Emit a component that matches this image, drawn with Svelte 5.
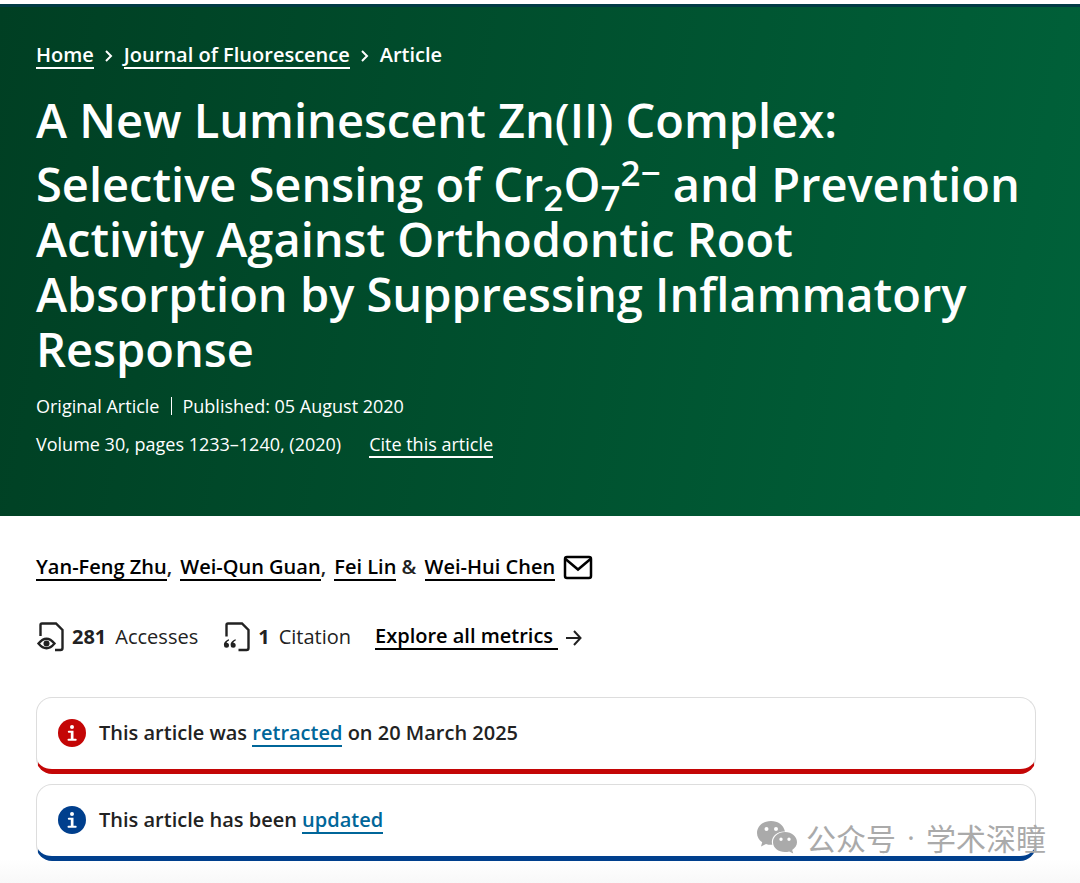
<script>
  const authors = ['Yan-Feng Zhu', 'Wei-Qun Guan', 'Fei Lin', 'Wei-Hui Chen'];
  const separators = ['', ', ', ', ', ' & '];
</script>

<svelte:head><title>Journal of Fluorescence</title></svelte:head>

<header>
  <nav aria-label="Breadcrumbs">
    <a href="#home">Home</a>
    <svg viewBox="0 0 10 12" aria-hidden="true"><path d="M2 1 7 6 2 11" /></svg>
    <a href="#journal">Journal of Fluorescence</a>
    <svg viewBox="0 0 10 12" aria-hidden="true"><path d="M2 1 7 6 2 11" /></svg>
    <span>Article</span>
  </nav>
  <h1>A New Luminescent Zn(II) Complex: Selective Sensing of Cr<sub>2</sub>O<sub>7</sub><sup>2−</sup> and Prevention Activity Against Orthodontic Root Absorption by Suppressing Inflammatory Response</h1>
  <ul class="identifiers">
    <li>Original Article</li>
    <li>Published: 05 August 2020</li>
  </ul>
  <p class="volume"><span>Volume 30, pages 1233–1240, (2020)</span><a href="#cite">Cite this article</a></p>
</header>

<main>
  <p class="authors">
    <span>{#each authors as author, i}{separators[i]}<a href="#author">{author}</a>{/each}</span>
    <a class="mail" href="#mail" aria-label="Email the corresponding author">
      <svg width="30" height="26" viewBox="0 0 30 26"><rect x="2" y="3" width="26" height="21" rx="2" /><path d="m2.500 5 12.500 10.500L27.500 5" /></svg>
    </a>
  </p>

  <ul class="metrics">
    <li>
      <svg width="30" height="30" viewBox="0 0 30 30" aria-hidden="true">
        <path d="M4.500 14V3Q4.500 1.500 6 1.500h14l6.500 6.500v18q0 2-2 2H19" />
        <path d="M2.500 21.500q8-9.500 16 0-8 9.500-16 0Z" />
        <circle class="dot" cx="10.500" cy="21.500" r="3" />
      </svg>
      <strong>281</strong><span>Accesses</span>
    </li>
    <li>
      <svg width="30" height="30" viewBox="0 0 30 30" aria-hidden="true">
        <path d="M4.500 14.500V3Q4.500 1.500 6 1.500h14l6.500 6.500v18q0 2-2 2H16.500" />
        <path class="dot" d="M7 17.200C3 18.500 1.700 21 2 23.200a2.500 2.500 0 1 0 2.500-2.500q.5-1.500 2.500-2.200ZM13.700 17.200C9.700 18.500 8.400 21 8.700 23.200a2.500 2.500 0 1 0 2.500-2.500q.5-1.500 2.500-2.200Z" />
      </svg>
      <strong>1</strong><span>Citation</span>
    </li>
    <li>
      <a class="explore" href="#metrics">Explore all metrics&nbsp;</a>
      <svg class="arrow" width="18" height="18" viewBox="0 0 18 18" aria-hidden="true"><path d="M1 10h14.500M9 3l6.500 7L9 17" /></svg>
    </li>
  </ul>

  <div class="notices">
    <p class="notice retracted">
      <svg viewBox="0 0 28 28" aria-hidden="true"><circle cx="14" cy="14" r="14" /><path d="M14 6a2 2 0 1 1 0 4 2 2 0 0 1 0-4ZM10.800 11.700h4.700v8h2.200q1 0 1 1t-1 1h-7.200q-1 0-1-1t1-1h2.300v-6h-2q-1 0-1-1t1-1Z" /></svg>
      <span>This article was <a href="#retracted">retracted</a> on 20 March 2025</span>
    </p>
    <p class="notice updated">
      <svg viewBox="0 0 28 28" aria-hidden="true"><circle cx="14" cy="14" r="14" /><path d="M14 6a2 2 0 1 1 0 4 2 2 0 0 1 0-4ZM10.800 11.700h4.700v8h2.200q1 0 1 1t-1 1h-7.200q-1 0-1-1t1-1h2.300v-6h-2q-1 0-1-1t1-1Z" /></svg>
      <span>This article has been <a href="#updated">updated</a></span>
    </p>
    <div class="watermark" lang="zh">
      <svg width="42" height="34" viewBox="0 0 42 34" aria-hidden="true">
        <path fill-rule="evenodd" d="M15 1C7 1 1 6.300 1 13c0 3.800 2 7 5.200 9.300L5 26.500l5-2.500c2 .7 4 1 6.300.8C14 17 21 11 29 11.500 27.500 5 22 1 15 1ZM10.500 7a2 2 0 1 1 0 4 2 2 0 0 1 0-4Zm9.500 0a2 2 0 1 1 0 4 2 2 0 0 1 0-4Z" />
        <path fill-rule="evenodd" d="M29 12c-6.700 0-12 4.500-12 10.200S22.300 32 29 32c1.500 0 3-.2 4.200-.6l4 2.100-1-3.600c3-2 4.800-4.500 4.800-7.700C41 16.500 35.700 12 29 12Zm-4 5.500a1.700 1.700 0 1 1 0 3.400 1.700 1.700 0 0 1 0-3.400Zm8 0a1.700 1.700 0 1 1 0 3.400 1.700 1.700 0 0 1 0-3.400Z" />
      </svg>
      <span>公众号</span><span class="point">·</span><span>学术深瞳</span>
    </div>
  </div>
</main>

<style>
  :global(body) {
    margin: 0;
    min-height: 100vh;
    color: #222;
    background: linear-gradient(#fff calc(100% - 24px), #f8f8f8) no-repeat;
    font: 20px/28px "Open Sans", "Noto Sans", sans-serif;
  }
  header {
    padding: 34px 36px 58px;
    border-top: 3px solid #003b44;
    margin-top: 4px;
    background: linear-gradient(100deg, #003f23, #00623a);
    color: #fff;
  }
  a { color: inherit; text-decoration: none; border-bottom: 2px solid; }
  p, ul, h1 { margin: 0; padding: 0; }
  ul { list-style: none; display: flex; }
  svg { flex: none; fill: none; stroke: currentColor; stroke-width: 2; }
  nav, .authors, .notice { display: flex; align-items: center; font-weight: 600; }
  nav { gap: 10px; align-items: baseline; }
  nav a, .volume a, .authors a, .explore, .notice a { line-height: 24px; display: inline-block; }
  nav svg { width: 10px; height: 12px; }
  h1 { margin-top: 24px; font-size: 47px; line-height: 55px; font-weight: 600; }
  sub, sup { font-size: 35px; line-height: 50px; }
  sub { vertical-align: -9px; line-height: 0; }
  sup { vertical-align: 16px; }
  .identifiers { margin-top: 15px; font-size: 18px; }
  .identifiers li + li { margin-left: 12px; padding-left: 11px; position: relative; }
  .identifiers li + li::before { content: ""; position: absolute; left: 0; top: 5px; height: 18px; border-left: 1px solid; }
  .volume { display: flex; align-items: baseline; gap: 28px; margin-top: 10px; font-size: 18px; }
  main { padding: 37px 44px 22px 36px; }
  .authors { gap: 8px; }
  .authors a + a { margin-left: 3px; }
  .authors .mail { border: 0; display: flex; }
  .mail svg { stroke-width: 2.500; }
  .authors a, .explore { color: #000; }
  .metrics { margin-top: 41px; align-items: center; }
  .metrics li { display: flex; align-items: center; }
  .metrics li + li { margin-left: 24px; }
  .metrics strong { margin: 0 9px 0 6px; }
  .metrics .explore { font-weight: 600; }
  .metrics svg { stroke-width: 2.400; }
  .metrics .arrow { stroke-width: 2; margin-left: 7px; }
  .metrics .dot { fill: currentColor; stroke: none; }
  .notices { position: relative; display: grid; gap: 10px; margin-top: 45px; }
  .notice { padding: 21px 21px 22px; gap: 13px; border: 1px solid #ddd; border-bottom: 5px solid; border-radius: 16px; background: #fff; }
  .notice svg { width: 28px; height: 28px; stroke: none; }
  .notice circle { fill: currentColor; }
  .notice path { fill: #fff; }
  .notice span { color: #222; }
  .notice a { color: #069; }
  .retracted { border-bottom-color: #c40606; color: #c40606; }
  .updated { border-bottom-color: #003f8d; color: #003f8d; }
  .watermark { position: absolute; right: -10px; bottom: 6px; display: flex; align-items: center; color: #aaa; font: 30px/36px "Noto Sans CJK SC", sans-serif; }
  .watermark svg { fill: currentColor; stroke: none; margin-right: 8px; }
  .watermark .point { width: 30px; text-align: center; font-family: "Open Sans", sans-serif; }
</style>
